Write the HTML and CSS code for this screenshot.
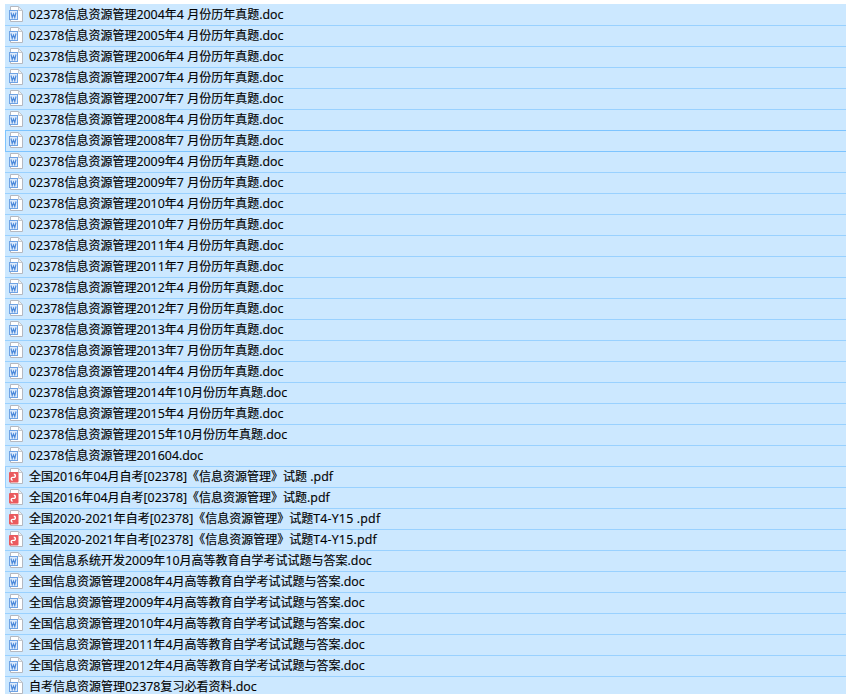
FILE: index.html
```html
<!DOCTYPE html>
<html lang="zh-CN">
<head>
<meta charset="utf-8">
<title>02378 信息资源管理</title>
<link rel="stylesheet" href="styles.css">
</head>
<body>
<svg class="defs" width="0" height="0" aria-hidden="true">
  <symbol id="doc" viewBox="0 0 16 16">
    <path d="M2.5 .5H10.5L14.5 4.5V15.5H2.5Z" fill="#fff" stroke="#b4b8c0"/>
    <path d="M10.5 .8V4.5H14.2" fill="#eef0f3" stroke="#c4c8ce"/>
    <rect x="1.5" y="4.5" width="8" height="9" fill="#dceafb" stroke="#6fa3e4"/>
    <path d="M3 6.5 4.2 11.5 5.5 8 6.8 11.5 8 6.5" fill="none" stroke="#4a88da" stroke-width="1.1"/>
  </symbol>
  <symbol id="pdf" viewBox="0 0 16 16">
    <path d="M2.5 .5H10.5L14.5 4.5V15.5H2.5Z" fill="#fff" stroke="#b4b8c0"/>
    <path d="M10.5 .8V4.5H14.2" fill="#eef0f3" stroke="#c4c8ce"/>
    <rect x="1" y="4" width="9.5" height="10.5" rx="1" fill="#ea5a5e"/>
    <path d="M5.8 6.2a1.6 1.6 0 0 1 0 3.2H4.6a1.4 1.4 0 0 0 0 2.8" fill="none" stroke="#fff" stroke-width="1.4"/>
  </symbol>
</svg>
<ul class="files">
  <li class="file"><svg class="icon"><use href="#doc"/></svg><span><i>02378</i>信息资源管理<i>2004</i>年<i>4 </i>月份历年真题<i>.doc</i></span></li>
  <li class="file"><svg class="icon"><use href="#doc"/></svg><span><i>02378</i>信息资源管理<i>2005</i>年<i>4 </i>月份历年真题<i>.doc</i></span></li>
  <li class="file"><svg class="icon"><use href="#doc"/></svg><span><i>02378</i>信息资源管理<i>2006</i>年<i>4 </i>月份历年真题<i>.doc</i></span></li>
  <li class="file"><svg class="icon"><use href="#doc"/></svg><span><i>02378</i>信息资源管理<i>2007</i>年<i>4 </i>月份历年真题<i>.doc</i></span></li>
  <li class="file"><svg class="icon"><use href="#doc"/></svg><span><i>02378</i>信息资源管理<i>2007</i>年<i>7 </i>月份历年真题<i>.doc</i></span></li>
  <li class="file"><svg class="icon"><use href="#doc"/></svg><span><i>02378</i>信息资源管理<i>2008</i>年<i>4 </i>月份历年真题<i>.doc</i></span></li>
  <li class="file focus"><svg class="icon"><use href="#doc"/></svg><span><i>02378</i>信息资源管理<i>2008</i>年<i>7 </i>月份历年真题<i>.doc</i></span></li>
  <li class="file"><svg class="icon"><use href="#doc"/></svg><span><i>02378</i>信息资源管理<i>2009</i>年<i>4 </i>月份历年真题<i>.doc</i></span></li>
  <li class="file"><svg class="icon"><use href="#doc"/></svg><span><i>02378</i>信息资源管理<i>2009</i>年<i>7 </i>月份历年真题<i>.doc</i></span></li>
  <li class="file"><svg class="icon"><use href="#doc"/></svg><span><i>02378</i>信息资源管理<i>2010</i>年<i>4 </i>月份历年真题<i>.doc</i></span></li>
  <li class="file"><svg class="icon"><use href="#doc"/></svg><span><i>02378</i>信息资源管理<i>2010</i>年<i>7 </i>月份历年真题<i>.doc</i></span></li>
  <li class="file"><svg class="icon"><use href="#doc"/></svg><span><i>02378</i>信息资源管理<i>2011</i>年<i>4 </i>月份历年真题<i>.doc</i></span></li>
  <li class="file"><svg class="icon"><use href="#doc"/></svg><span><i>02378</i>信息资源管理<i>2011</i>年<i>7 </i>月份历年真题<i>.doc</i></span></li>
  <li class="file"><svg class="icon"><use href="#doc"/></svg><span><i>02378</i>信息资源管理<i>2012</i>年<i>4 </i>月份历年真题<i>.doc</i></span></li>
  <li class="file"><svg class="icon"><use href="#doc"/></svg><span><i>02378</i>信息资源管理<i>2012</i>年<i>7 </i>月份历年真题<i>.doc</i></span></li>
  <li class="file"><svg class="icon"><use href="#doc"/></svg><span><i>02378</i>信息资源管理<i>2013</i>年<i>4 </i>月份历年真题<i>.doc</i></span></li>
  <li class="file"><svg class="icon"><use href="#doc"/></svg><span><i>02378</i>信息资源管理<i>2013</i>年<i>7 </i>月份历年真题<i>.doc</i></span></li>
  <li class="file"><svg class="icon"><use href="#doc"/></svg><span><i>02378</i>信息资源管理<i>2014</i>年<i>4 </i>月份历年真题<i>.doc</i></span></li>
  <li class="file"><svg class="icon"><use href="#doc"/></svg><span><i>02378</i>信息资源管理<i>2014</i>年<i>10</i>月份历年真题<i>.doc</i></span></li>
  <li class="file"><svg class="icon"><use href="#doc"/></svg><span><i>02378</i>信息资源管理<i>2015</i>年<i>4 </i>月份历年真题<i>.doc</i></span></li>
  <li class="file"><svg class="icon"><use href="#doc"/></svg><span><i>02378</i>信息资源管理<i>2015</i>年<i>10</i>月份历年真题<i>.doc</i></span></li>
  <li class="file"><svg class="icon"><use href="#doc"/></svg><span><i>02378</i>信息资源管理<i>201604.doc</i></span></li>
  <li class="file mark"><svg class="icon"><use href="#pdf"/></svg><span>全国<i>2016</i>年<i>04</i>月自考<i>[02378]</i>《信息资源管理》试题<i> .pdf</i></span></li>
  <li class="file"><svg class="icon"><use href="#pdf"/></svg><span>全国<i>2016</i>年<i>04</i>月自考<i>[02378]</i>《信息资源管理》试题<i>.pdf</i></span></li>
  <li class="file"><svg class="icon"><use href="#pdf"/></svg><span>全国<i>2020-2021</i>年自考<i>[02378]</i>《信息资源管理》试题<i class="wide">T4-Y15 .pdf</i></span></li>
  <li class="file"><svg class="icon"><use href="#pdf"/></svg><span>全国<i>2020-2021</i>年自考<i>[02378]</i>《信息资源管理》试题<i class="wide">T4-Y15.pdf</i></span></li>
  <li class="file"><svg class="icon"><use href="#doc"/></svg><span>全国信息系统开发<i>2009</i>年<i>10</i>月高等教育自学考试试题与答案<i>.doc</i></span></li>
  <li class="file"><svg class="icon"><use href="#doc"/></svg><span>全国信息资源管理<i>2008</i>年<i>4</i>月高等教育自学考试试题与答案<i>.doc</i></span></li>
  <li class="file"><svg class="icon"><use href="#doc"/></svg><span>全国信息资源管理<i>2009</i>年<i>4</i>月高等教育自学考试试题与答案<i>.doc</i></span></li>
  <li class="file"><svg class="icon"><use href="#doc"/></svg><span>全国信息资源管理<i>2010</i>年<i>4</i>月高等教育自学考试试题与答案<i>.doc</i></span></li>
  <li class="file"><svg class="icon"><use href="#doc"/></svg><span>全国信息资源管理<i>2011</i>年<i>4</i>月高等教育自学考试试题与答案<i>.doc</i></span></li>
  <li class="file"><svg class="icon"><use href="#doc"/></svg><span>全国信息资源管理<i>2012</i>年<i>4</i>月高等教育自学考试试题与答案<i>.doc</i></span></li>
  <li class="file"><svg class="icon"><use href="#doc"/></svg><span>自考信息资源管理<i>02378</i>复习必看资料<i>.doc</i></span></li>
</ul>
</body>
</html>
```

FILE: styles.css
```css
html, body {
  margin: 0;
  padding: 0;
  height: 694px;
  overflow: hidden;
  background: #fff;
}

.defs {
  position: absolute;
}

.files {
  list-style: none;
  margin: 0;
  padding: 4px 0 0 5px;
  font: 12px/20px "Open Sans", "Noto Sans CJK SC", sans-serif;
  color: #000;
  -webkit-text-stroke: 0.15px #000;
}

.file {
  display: flex;
  align-items: center;
  gap: 5px;
  height: 20px;
  padding-left: 3px;
  background: #cce8ff;
  border-bottom: 1px solid #99d1ff;
  white-space: pre;
}

.file:first-child {
  border-top: 1px solid #cce8ff;
}

.file i {
  font-style: normal;
  font-size: 12.4px;
}

.file .wide {
  letter-spacing: 0.2px;
}

.focus {
  padding-left: 2px;
  border-left: 1px solid #7dc4ff;
  border-bottom-color: #7dc4ff;
  box-shadow: 0 -1px 0 #7dc4ff;
}

.mark {
  padding-left: 2px;
  border-left: 1px solid #99d1ff;
}

.icon {
  flex: none;
  width: 16px;
  height: 16px;
  margin-bottom: 2px;
}
```
